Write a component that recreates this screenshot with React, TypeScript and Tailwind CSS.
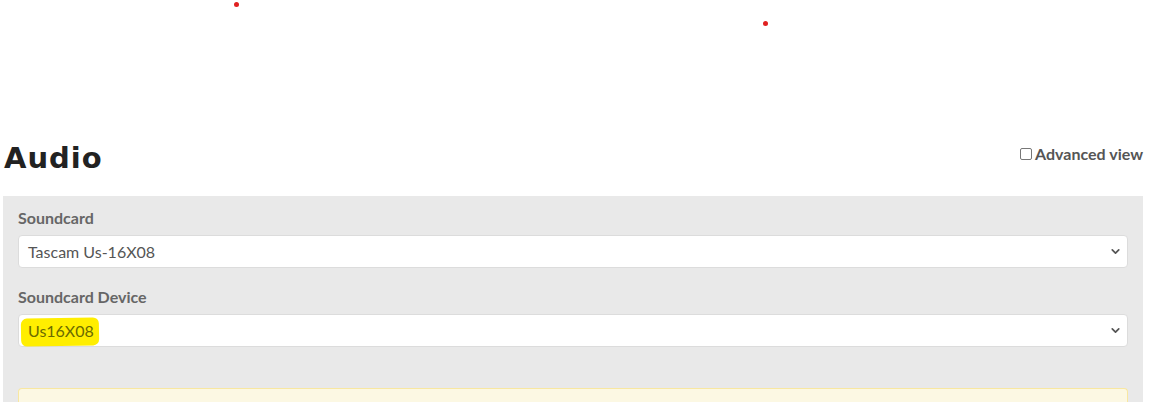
import { ChevronDown } from 'lucide-react';

function Select({ value, highlight }: { value: string; highlight?: boolean }) {
  return (
    <div className="relative flex h-[33px] items-center rounded-[4px] border border-[#dcdcdc] bg-white pl-[9px] pr-[5px]">
      {highlight && (
        <span className="absolute left-[2px] top-[3px] h-[28px] w-[78px] -rotate-1 rounded-[6px] bg-[#ffee00]" />
      )}
      <span className={`relative text-[16px] ${highlight ? 'text-[#6b6b00]' : 'text-[#555]'}`}>{value}</span>
      <ChevronDown className="relative ml-auto text-[#555]" size={13} strokeWidth={3.2} />
    </div>
  );
}

export default function App() {
  return (
    <div className="relative h-[402px] w-[1156px] overflow-hidden bg-white font-['Lato','Liberation_Sans',sans-serif]">
      <span className="absolute left-[234px] top-[2px] h-[5px] w-[5px] rounded-full bg-[#e02020]" />
      <span className="absolute left-[763px] top-[21px] h-[5px] w-[5px] rounded-full bg-[#e02020]" />

      <div className="flex items-end justify-between pl-[4px] pr-[13px] pt-[140px]">
        <h1 className="font-['DejaVu_Sans',sans-serif] text-[29px] font-bold leading-[36px] tracking-[1px] text-[#222]">
          Audio
        </h1>
        <label className="mb-[10px] flex items-center gap-[3px] text-[16px] font-bold text-[#555]">
          <span className="h-[12px] w-[12px] rounded-[2px] border border-[#777] bg-white" />
          Advanced view
        </label>
      </div>

      <div className="ml-[3px] mt-[20px] w-[1140px] bg-[#e9e9e9] px-[15px] pt-[12px]">
        <div className="text-[16px] font-bold leading-[20px] text-[#666]">Soundcard</div>
        <div className="mt-[7px]">
          <Select value="Tascam Us-16X08" />
        </div>
        <div className="mt-[19px] text-[16px] font-bold leading-[20px] text-[#666]">Soundcard Device</div>
        <div className="mt-[7px]">
          <Select value="Us16X08" highlight />
        </div>
        <div className="mt-[41px] h-[40px] rounded-t-[4px] border border-b-0 border-[#f8e7a1] bg-[#fcf8e3]" />
      </div>
    </div>
  );
}
